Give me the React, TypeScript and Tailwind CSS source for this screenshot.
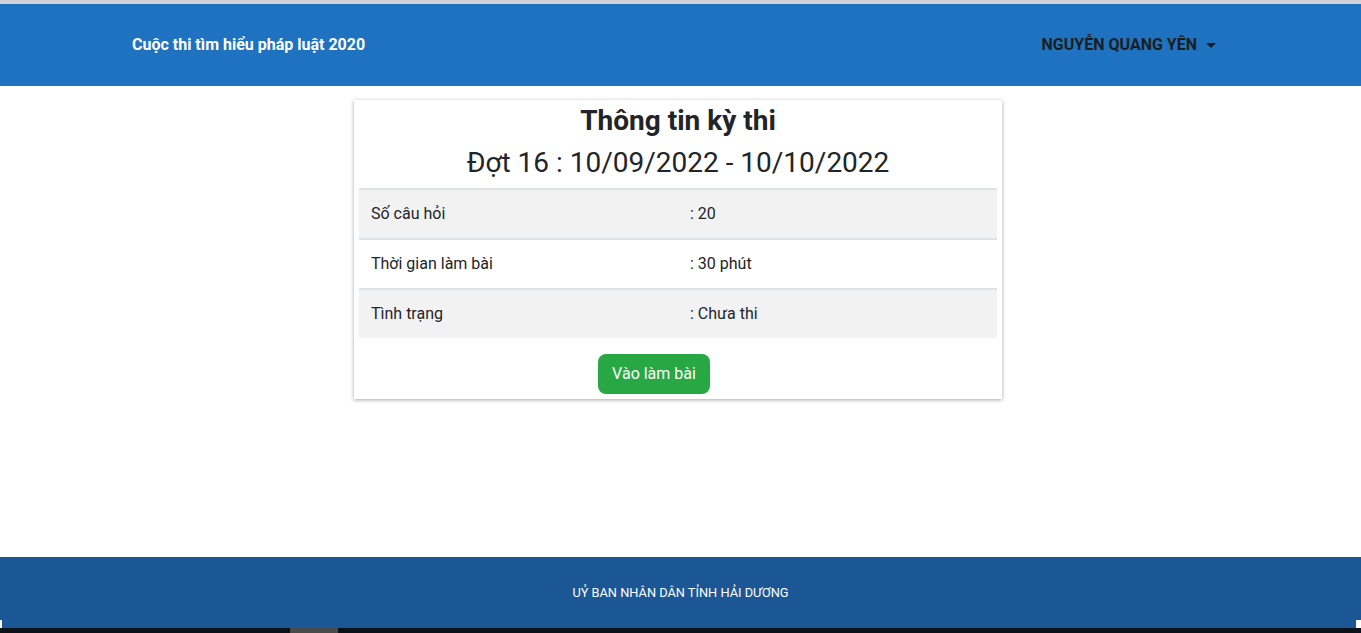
import React from "react";

const rows = [
  { k: "Số câu hỏi", v: ": 20", bg: "bg-[#f2f2f2]" },
  { k: "Thời gian làm bài", v: ": 30 phút", bg: "bg-white" },
  { k: "Tình trạng", v: ": Chưa thi", bg: "bg-[#f2f2f2]" },
];

export default function App() {
  return (
    <div className="flex h-[633px] flex-col overflow-hidden bg-white font-['Roboto',sans-serif] text-[#212529]">
      <div className="h-[4px] bg-[#cfd3d8]" />
      <header className="flex h-[82px] items-center justify-between bg-[#1f72bf] pl-[132px] pr-[145px]">
        <div className="text-[16px] font-bold text-white">Cuộc thi tìm hiểu pháp luật 2020</div>
        <div className="flex items-center gap-[9px] text-[16px] font-bold text-[#1b1e21]">
          <span>NGUYỄN QUANG YÊN</span>
          <span className="mt-[1px] h-0 w-0 border-x-[5px] border-t-[5px] border-x-transparent border-t-[#1b1e21]" />
        </div>
      </header>
      <main className="flex h-[471px] justify-center pr-[5px] pt-[14px]">
        <div className="h-[299px] w-[648px] bg-white px-[5px] shadow-[0_1px_4px_rgba(0,0,0,0.35)]">
          <h1 className="pt-[4px] text-center text-[28px] font-bold leading-[34px]">Thông tin kỳ thi</h1>
          <h2 className="mt-[8px] text-center text-[28px] font-normal leading-[34px]">Đợt 16 : 10/09/2022 - 10/10/2022</h2>
          <div className="mt-[8px]">
            {rows.map((r) => (
              <div key={r.k} className={`flex h-[50px] items-center border-t-2 border-[#dee2e6] text-[16px] ${r.bg}`}>
                <div className="w-[331px] pl-[12px]">{r.k}</div>
                <div>{r.v}</div>
              </div>
            ))}
          </div>
          <div className="flex justify-center pt-[16px] pr-[48px]">
            <button className="h-[40px] rounded-[8px] bg-[#28a745] px-[14px] text-[16px] text-white">Vào làm bài</button>
          </div>
        </div>
      </main>
      <footer className="relative flex h-[71px] items-center justify-center bg-[#1a5794] pt-[1px] text-[12.8px] text-white">
        <span>UỶ BAN NHÂN DÂN TỈNH HẢI DƯƠNG</span>
        <span className="absolute bottom-0 left-0 h-[8px] w-[2px] bg-white" />
        <span className="absolute bottom-0 right-0 h-[8px] w-[5px] bg-white" />
      </footer>
      <div className="relative h-[5px] bg-[#0b1118]">
        <span className="absolute left-[290px] top-0 h-[5px] w-[48px] bg-[#4a4a4a]" />
      </div>
    </div>
  );
}
